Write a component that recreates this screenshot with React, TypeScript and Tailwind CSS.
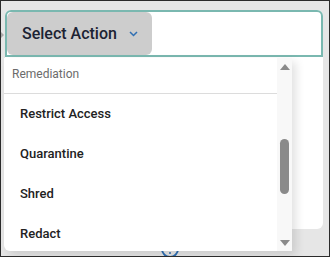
const items = ["Restrict Access", "Quarantine", "Shred", "Redact"];

const ChevronDown = () => (
  <svg width="9" height="6" viewBox="0 0 9 6" fill="none">
    <path d="M1 1l3.5 3.5L8 1" stroke="#2f6fb3" strokeWidth="1.5" />
  </svg>
);

const Scrollbar = () => (
  <div className="flex w-[15px] flex-col items-center bg-[#f8f8f8] pt-[6px] pb-[5px]">
    <div className="h-0 w-0 border-x-[5px] border-x-transparent border-b-[6px] border-b-[#8a8a8a]" />
    <div className="mt-[69px] h-[55px] w-[9px] rounded-full bg-[#8a8a8a]" />
    <div className="mt-auto h-0 w-0 border-x-[5px] border-x-transparent border-t-[6px] border-t-[#8a8a8a]" />
  </div>
);

export default function App() {
  return (
    <div className="relative w-[330px] h-[257px] overflow-hidden border border-[#2b2b2b] bg-[#e6e6e6] font-['Roboto',sans-serif]">
      {/* little caret peeking in on the left */}
      <div className="absolute left-0 top-[31px] w-0 h-0 border-y-[3px] border-y-transparent border-l-[3px] border-l-[#aaa]" />

      <div className="ml-[4px] mr-[6px] mt-[9px] h-[219px] rounded-[6px] bg-white">
        <div className="h-[47px] rounded-t-[6px] border-2 border-[#7ab8b0]">
          <button className="flex h-full w-[145px] items-center gap-[12px] rounded-[6px] bg-[#cdcdcd] pl-[15px] text-[16px] font-medium text-[#1c2333]">
            Select Action
            <ChevronDown />
          </button>
        </div>
      </div>

      <div className="flex justify-center pt-[11px] pl-[10px]">
        <div className="flex h-[18px] w-[18px] items-end justify-center rounded-full border-2 border-[#2f6fb3] pb-[2px]">
          <div className="h-[2px] w-[2px] rounded-full bg-[#2f6fb3]" />
        </div>
      </div>

      {/* dropdown menu */}
      <div className="absolute left-[3px] top-[57px] flex h-[193px] w-[288px] overflow-hidden rounded-bl-[6px] bg-white shadow-[4px_4px_10px_rgba(0,0,0,0.12)]">
        <div className="flex-1">
          <div className="h-[36px] border-b border-[#dcdcdc] pl-[8px] pt-[8px] text-[12px] leading-[16px] text-[#6b6b6b]">
            Remediation
          </div>
          {items.map((item) => (
            <div
              key={item}
              className="flex h-[40px] items-center pl-[16px] text-[13px] font-medium text-[#222]"
            >
              {item}
            </div>
          ))}
        </div>
        <Scrollbar />
      </div>
    </div>
  );
}
